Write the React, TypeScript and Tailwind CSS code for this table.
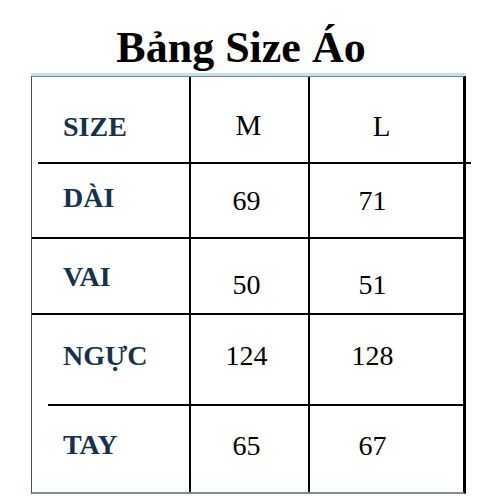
type Row = {
  label: string;
  m: string;
  l: string;
  h: string;
  labelPad: string;
  numPad: string;
};

const rows: Row[] = [
  { label: "DÀI", m: "69", l: "71", h: "h-[73px]", labelPad: "pb-[5px]", numPad: "pt-0" },
  { label: "VAI", m: "50", l: "51", h: "h-[74px]", labelPad: "pt-[2px]", numPad: "pt-[18px]" },
  { label: "NGỰC", m: "124", l: "128", h: "h-[89px]", labelPad: "pb-[7px]", numPad: "pb-[7px]" },
  { label: "TAY", m: "65", l: "67", h: "h-[86px]", labelPad: "pb-[8px]", numPad: "pb-[6px]" },
];

const separators = ["ml-0 mr-0", "ml-0 mr-0", "ml-[16px] mr-0"];

function SizeRow({ row }: { row: Row }) {
  return (
    <div className={`flex ${row.h}`}>
      <div className={`flex w-[159px] items-center border-r-2 border-black pl-[31px] ${row.labelPad}`}>
        <span className="font-['Liberation_Serif',serif] text-[28px] font-bold leading-none text-[#15314b]">
          {row.label}
        </span>
      </div>
      <div className={`flex w-[119px] items-center justify-center border-r-2 border-black pr-[6px] ${row.numPad}`}>
        <span className="font-['Liberation_Serif',serif] text-[28px] leading-none text-black">{row.m}</span>
      </div>
      <div className={`flex flex-1 items-center justify-center pr-[28px] ${row.numPad}`}>
        <span className="font-['Liberation_Serif',serif] text-[28px] leading-none text-black">{row.l}</span>
      </div>
    </div>
  );
}

export default function App() {
  return (
    <div className="h-[500px] w-[500px] overflow-hidden bg-white font-['Liberation_Serif',serif]">
      <div className="mt-[26px] h-[44px] pr-[18px] text-center font-['Liberation_Serif',serif] text-[44px] font-bold leading-none text-black">
        Bảng Size Áo
      </div>

      <div className="ml-[31px] mt-[3px] w-[435px] border-t-[3px] border-[#c4dff2]">
        <div className="border-b-2 border-l border-r-[3px] border-t border-b-[#7c8c9a] border-l-[#3f4f5c] border-r-black border-t-[#6f808e]">
          <div className="flex h-[85px]">
            <div className="flex w-[159px] items-center border-r-2 border-black pl-[31px] pt-[14px]">
              <span className="font-['Liberation_Serif',serif] text-[28px] font-bold leading-none text-[#15314b]">
                SIZE
              </span>
            </div>
            <div className="flex w-[119px] items-center justify-center border-r-2 border-black pr-[2px] pt-[12px]">
              <span className="font-['Liberation_Serif',serif] text-[29px] leading-none text-black">M</span>
            </div>
            <div className="flex flex-1 items-center justify-center pr-[10px] pt-[14px]">
              <span className="font-['Liberation_Serif',serif] text-[29px] leading-none text-black">L</span>
            </div>
          </div>
          <div className="ml-[6px] mr-[-8px] h-[2px] bg-black" />

          {rows.map((row, i) => (
            <div key={row.label}>
              <SizeRow row={row} />
              {i < separators.length && <div className={`h-[2px] bg-black ${separators[i]}`} />}
            </div>
          ))}
        </div>
      </div>
    </div>
  );
}
